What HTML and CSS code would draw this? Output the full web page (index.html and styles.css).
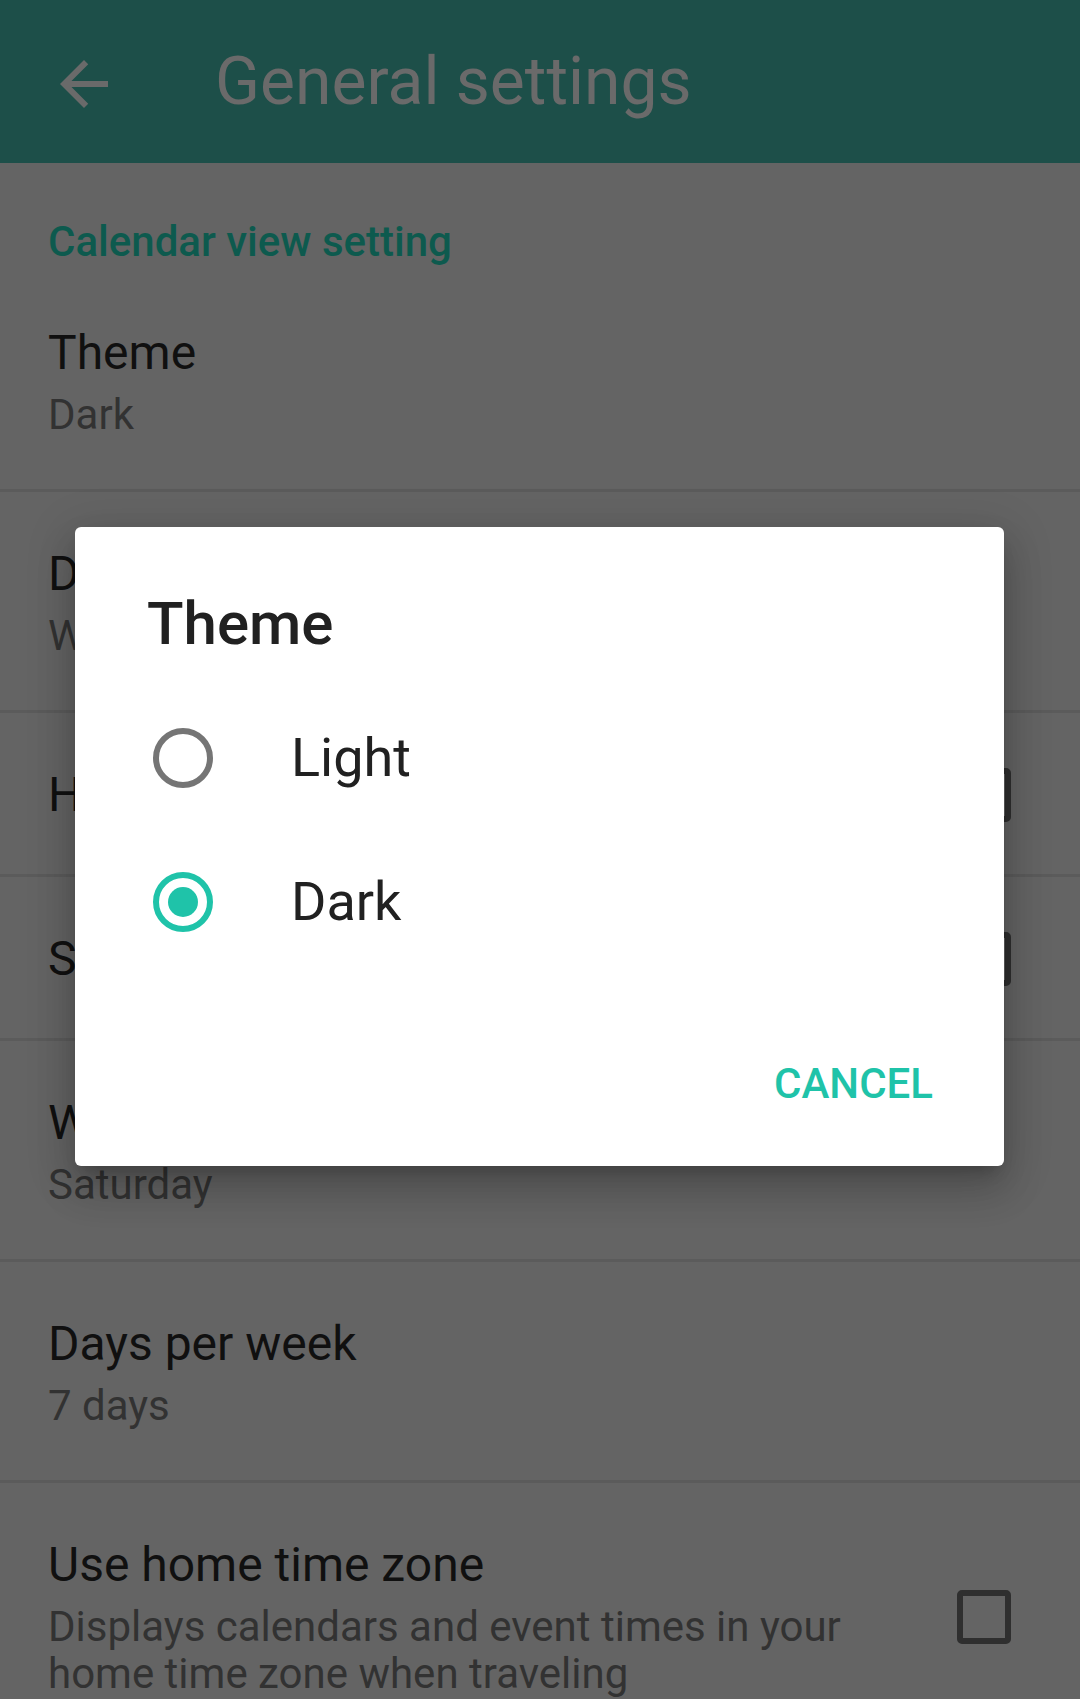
FILE: index.html
```html
<!DOCTYPE html>
<html lang="en">
<head>
<meta charset="utf-8">
<title>General settings</title>
<link rel="stylesheet" href="styles.css">
</head>
<body>
<div class="screen">
  <header class="appbar">
    <svg class="back" viewBox="0 0 24 24" width="72" height="72" aria-hidden="true">
      <path d="M20 11H7.83l5.59-5.59L12 4l-8 8 8 8 1.41-1.41L7.83 13H20v-2z"/>
    </svg>
    <h1 class="appbar-title">General settings</h1>
  </header>

  <main class="list">
    <div class="category">Calendar view setting</div>

    <div class="row">
      <div class="texts">
        <div class="title">Theme</div>
        <div class="summary">Dark</div>
      </div>
    </div>

    <div class="row">
      <div class="texts">
        <div class="title">Default view</div>
        <div class="summary">Week</div>
      </div>
    </div>

    <div class="row single">
      <div class="texts">
        <div class="title">Hide weekends</div>
      </div>
      <span class="checkbox"></span>
    </div>

    <div class="row single">
      <div class="texts">
        <div class="title">Show week numbers</div>
      </div>
      <span class="checkbox"></span>
    </div>

    <div class="row">
      <div class="texts">
        <div class="title">Week starts on</div>
        <div class="summary">Saturday</div>
      </div>
    </div>

    <div class="row">
      <div class="texts">
        <div class="title">Days per week</div>
        <div class="summary">7 days</div>
      </div>
    </div>

    <div class="row">
      <div class="texts narrow">
        <div class="title">Use home time zone</div>
        <div class="summary">Displays calendars and event times in your home time zone when traveling</div>
      </div>
      <span class="checkbox"></span>
    </div>
  </main>

  <div class="dialog" role="dialog">
    <h2 class="dialog-title">Theme</h2>
    <div class="options">
      <div class="option">
        <span class="radio"></span>
        <span class="option-label">Light</span>
      </div>
      <div class="option">
        <span class="radio checked"></span>
        <span class="option-label">Dark</span>
      </div>
    </div>
    <div class="actions">
      <span class="btn">CANCEL</span>
    </div>
  </div>
</div>
</body>
</html>
```

FILE: styles.css
```css
* { box-sizing: border-box; }

html, body {
  margin: 0;
  padding: 0;
  background: #646464;
}

body {
  font-family: Roboto, "Noto Sans", "Liberation Sans", sans-serif;
  width: 1080px;
  height: 1699px;
  overflow: hidden;
}

.screen {
  position: relative;
  width: 1080px;
  height: 1699px;
  overflow: hidden;
  background: #646464;
}

/* App bar */
.appbar {
  height: 163px;
  background: #1d4f49;
  display: flex;
  align-items: center;
  padding-left: 48px;
}

.back {
  fill: #6a6a6a;
  flex: none;
  margin-top: 4px;
}

.appbar-title {
  margin: 0 0 0 95px;
  font-size: 66px;
  font-weight: 400;
  color: #6a6a6a;
  line-height: 1.172;
}

/* List */
.list {
  display: flex;
  flex-direction: column;
}

.category {
  padding: 55px 48px 5px;
  font-size: 42px;
  line-height: 48px;
  font-weight: 500;
  color: #0d5a4e;
}

.row {
  display: flex;
  align-items: center;
  padding: 54px 69px 51px 48px;
  border-bottom: 3px solid #5b5b5b;
}

.row.single {
  padding-bottom: 51px;
}

.texts {
  flex: 1;
  min-width: 0;
}

.texts.narrow {
  flex: none;
  width: 830px;
}

.title {
  font-size: 48px;
  line-height: 56px;
  color: #101010;
}

.summary {
  margin-top: 10px;
  font-size: 42px;
  line-height: 47px;
  color: #323232;
}

.checkbox {
  margin-left: auto;
  flex: none;
  width: 54px;
  height: 54px;
  border: 6px solid #2f2f2f;
  border-radius: 5px;
}

/* Dialog */
.dialog {
  position: absolute;
  left: 75px;
  top: 527px;
  width: 929px;
  height: 639px;
  background: #ffffff;
  border-radius: 6px;
  padding: 62px 71px 0 78px;
  box-shadow:
    0 24px 38px 3px rgba(0, 0, 0, 0.14),
    0 9px 46px 8px rgba(0, 0, 0, 0.12),
    0 11px 15px -7px rgba(0, 0, 0, 0.2);
}

.dialog-title {
  margin: 0 0 27px -6px;
  font-size: 60px;
  line-height: 70px;
  font-weight: 500;
  color: #212121;
}

.options {
  display: flex;
  flex-direction: column;
}

.option {
  height: 144px;
  display: flex;
  align-items: center;
}

.radio {
  flex: none;
  width: 60px;
  height: 60px;
  border-radius: 50%;
  border: 6px solid #757575;
  display: flex;
  align-items: center;
  justify-content: center;
}

.radio.checked {
  border-color: #1fc3a9;
}

.radio.checked::after {
  content: "";
  width: 30px;
  height: 30px;
  border-radius: 50%;
  background: #1fc3a9;
}

.option-label {
  margin-left: 78px;
  font-size: 54px;
  line-height: 64px;
  color: #212121;
}

.actions {
  display: flex;
  justify-content: flex-end;
  margin-top: 86px;
}

.btn {
  font-size: 42px;
  line-height: 48px;
  font-weight: 500;
  color: #1fc3a9;
}
```
